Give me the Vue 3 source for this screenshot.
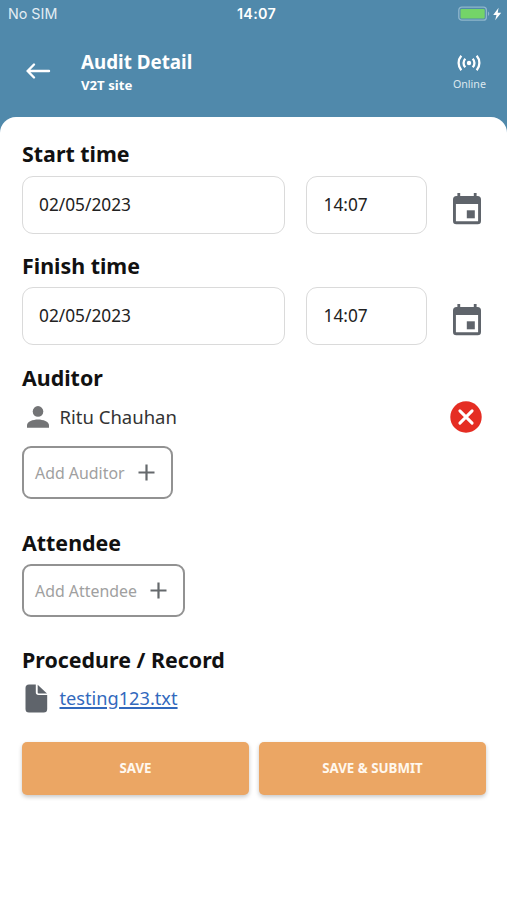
<template>
  <div class="screen">
    <!-- Status bar -->
    <div class="status-bar">
      <span class="carrier">No SIM</span>
      <span class="clock">14:07</span>
      <span class="power">
        <svg width="45" height="16" viewBox="0 0 45 16">
          <rect x="0.8" y="1.2" width="27.6" height="13" rx="3" fill="none" stroke="#8fb6cc" stroke-width="1.3" />
          <rect x="2.5" y="3" width="24.2" height="9.4" rx="1" fill="#74d468" />
          <path d="M30 5.5c1.7.7 1.7 3.7 0 4.4z" fill="#8fb6cc" />
          <path d="M40.6 1.7 35.2 8.9h3.3l-1.3 5.3 6-7.5h-3.5z" fill="#fff" />
        </svg>
      </span>
    </div>

    <!-- Page header -->
    <header class="header">
      <button class="back" aria-label="Back">
        <svg width="26" height="18" viewBox="0 0 26 18" fill="none" stroke="#fff" stroke-width="2.4" stroke-linecap="round" stroke-linejoin="round">
          <path d="M24 9H2.6M9 2.5 2.6 9 9 15.5" />
        </svg>
      </button>
      <div class="titles">
        <h1>Audit Detail</h1>
        <p>{{ site }}</p>
      </div>
      <div class="connection">
        <svg width="24" height="18" viewBox="0 0 24 18" fill="none" stroke="#fff" stroke-width="2.3">
          <circle cx="12" cy="9" r="2.2" fill="#fff" stroke="none" />
          <path d="M8.3 4.7a6.2 6.2 0 0 0 0 8.6M15.7 4.7a6.2 6.2 0 0 1 0 8.6M4.3 1.8a11 11 0 0 0 0 14.4M19.7 1.8a11 11 0 0 1 0 14.4" />
        </svg>
        <span>Online</span>
      </div>
    </header>

    <main class="sheet">
      <section v-for="slot in times" :key="slot.label" class="time">
        <h2>{{ slot.label }}</h2>
        <div class="time-row">
          <div class="field date">{{ slot.date }}</div>
          <div class="field hour">{{ slot.hour }}</div>
          <svg class="calendar" width="30" height="32" viewBox="0 0 30 32">
            <path fill="#5f646b" fill-rule="evenodd" d="M5.4 0h2.8v3h13.6V0h2.8v3h.9A3.5 3.5 0 0 1 29 6.5V28a3.3 3.3 0 0 1-3.3 3.3H4.3A3.3 3.3 0 0 1 1 28V6.5A3.5 3.5 0 0 1 4.5 3h.9zM3.9 11v17.3h22.2V11z" />
            <rect x="14.8" y="17.3" width="8" height="8" fill="#5f646b" />
          </svg>
        </div>
      </section>

      <section class="auditor">
        <h2>Auditor</h2>
        <div v-for="name in auditors" :key="name" class="person">
          <svg width="22" height="22" viewBox="0 0 22 22" fill="#737476">
            <circle cx="11" cy="5.4" r="5.3" />
            <path d="M0 21.8v-2.6c0-3.6 6-5.7 11-5.7s11 2.1 11 5.7v2.6z" />
          </svg>
          <span>{{ name }}</span>
          <button class="remove" aria-label="Remove auditor">
            <svg width="32" height="32" viewBox="0 0 32 32">
              <circle cx="16" cy="16" r="15.7" fill="#e52d23" />
              <path d="m9.9 9.9 12.2 12.2M22.1 9.9 9.9 22.1" stroke="#fff" stroke-width="3" stroke-linecap="round" />
            </svg>
          </button>
        </div>
        <button class="add">
          <span>Add Auditor</span>
          <svg width="17" height="17" viewBox="0 0 17 17" stroke="#65696c" stroke-width="2.2"><path d="M8.5.5v16M.5 8.5h16" /></svg>
        </button>
      </section>

      <section class="attendee">
        <h2>Attendee</h2>
        <button class="add">
          <span>Add Attendee</span>
          <svg width="17" height="17" viewBox="0 0 17 17" stroke="#65696c" stroke-width="2.2"><path d="M8.5.5v16M.5 8.5h16" /></svg>
        </button>
      </section>

      <section class="record">
        <h2>Procedure / Record</h2>
        <div class="file">
          <svg width="23" height="29" viewBox="0 0 23 29" fill="#5f646b">
            <path d="M4 .5h6.8v7.8a2.7 2.7 0 0 0 2.7 2.7h8.7v14a3.5 3.5 0 0 1-3.5 3.5H4A3.5 3.5 0 0 1 .5 25V4A3.5 3.5 0 0 1 4 .5z" />
            <path d="M12.7.8 22 9.5h-8.3a1 1 0 0 1-1-1z" />
          </svg>
          <a href="#">{{ fileName }}</a>
        </div>
      </section>

      <div class="actions">
        <button>SAVE</button>
        <button>SAVE &amp; SUBMIT</button>
      </div>
    </main>
  </div>
</template>

<script setup>
import { ref } from 'vue'

const site = ref('V2T site')
const times = ref([
  { label: 'Start time', date: '02/05/2023', hour: '14:07' },
  { label: 'Finish time', date: '02/05/2023', hour: '14:07' }
])
const auditors = ref(['Ritu Chauhan'])
const fileName = ref('testing123.txt')
</script>

<style>
body {
  background: #5089ab;
}
</style>

<style scoped>
.screen {
  display: flex;
  flex-direction: column;
  min-height: 100vh;
  background: #5089ab;
  font-family: 'Noto Sans', sans-serif;
  color: #111;
}

button {
  margin: 0;
  padding: 0;
  border: none;
  background: none;
  font-family: inherit;
  cursor: pointer;
}

svg {
  display: block;
  flex: none;
}

h1,
h2,
p {
  margin: 0;
}

/* Status bar */
.status-bar {
  display: grid;
  grid-template-columns: 1fr auto 1fr;
  align-items: center;
  height: 27px;
  padding: 0 4px 0 8px;
  font-family: Inter, sans-serif;
  font-size: 14.3px;
  color: #fff;
}

.carrier {
  color: #e3edf3;
}

.clock {
  padding-left: 2px;
  font-weight: 600;
  letter-spacing: 0.3px;
}

.power {
  justify-self: end;
}

/* Header */
.header {
  display: flex;
  height: 90px;
  color: #fff;
}

.back {
  align-self: flex-start;
  margin: 35px 0 0 25px;
}

.titles {
  flex: 1;
  padding: 22px 0 0 30px;
}

h1 {
  font-size: 18.8px;
  line-height: 27px;
  font-weight: 700;
}

.titles p {
  font-size: 13.2px;
  line-height: 19px;
  font-weight: 700;
}

.connection {
  display: flex;
  flex-direction: column;
  align-items: center;
  padding: 27px 21px 0 0;
}

.connection span {
  margin-top: 4px;
  font-size: 10.7px;
  line-height: 17px;
  color: #dce8ef;
}

/* Content */
.sheet {
  flex: 1;
  padding: 22px 21px 0 22px;
  border-radius: 16px 16px 0 0;
  background: #fff;
}

h2 {
  padding-bottom: 2px;
  font-size: 21.4px;
  line-height: 29px;
  font-weight: 700;
}

.time {
  height: 111.5px;
}

.time-row {
  display: flex;
  align-items: center;
  padding-top: 5.5px;
}

.field {
  box-sizing: border-box;
  height: 58px;
  padding-left: 16px;
  border: 1.5px solid #dadada;
  border-radius: 11px;
  font-size: 17.3px;
  line-height: 56.6px;
  color: #222;
}

.date {
  width: 263px;
}

.hour {
  width: 121px;
  margin-left: 21px;
  padding-left: 16.5px;
}

.calendar {
  margin: 8px 0 0 24.5px;
}

.person {
  display: flex;
  align-items: center;
  height: 32px;
  margin-top: 7px;
  padding: 0 4px 0 5px;
}

.person span {
  flex: 1;
  margin-left: 10.5px;
  font-size: 18.5px;
  color: #333;
}

.add {
  display: flex;
  align-items: center;
  box-sizing: border-box;
  height: 53px;
  padding: 0 16.5px 0 11px;
  border: 2px solid #929292;
  border-radius: 9px;
}

.add span {
  margin-right: 13px;
  font-size: 15.9px;
  color: #a0a0a0;
}

.auditor {
  height: 165.5px;
  padding-top: 0.8px;
  box-sizing: border-box;
}

.auditor .add {
  margin-top: 13.7px;
}

.attendee {
  height: 117px;
}

.attendee .add {
  margin-top: 5.5px;
}

.file {
  display: flex;
  align-items: center;
  height: 30px;
  margin-top: 7.5px;
  padding-left: 3px;
}

.file a {
  margin-left: 11.5px;
  font-size: 18.2px;
  color: #3269bd;
  text-decoration-thickness: 1.5px;
  text-underline-offset: 2px;
}

.actions {
  display: grid;
  grid-template-columns: 1fr 1fr;
  gap: 10px;
  margin-top: 28.5px;
}

.actions button {
  height: 53px;
  border-radius: 5px;
  background: #eba664;
  box-shadow: 0 2px 4px rgba(0, 0, 0, 0.22);
  font-size: 13.3px;
  font-weight: 700;
  color: #fff8ef;
}
</style>
